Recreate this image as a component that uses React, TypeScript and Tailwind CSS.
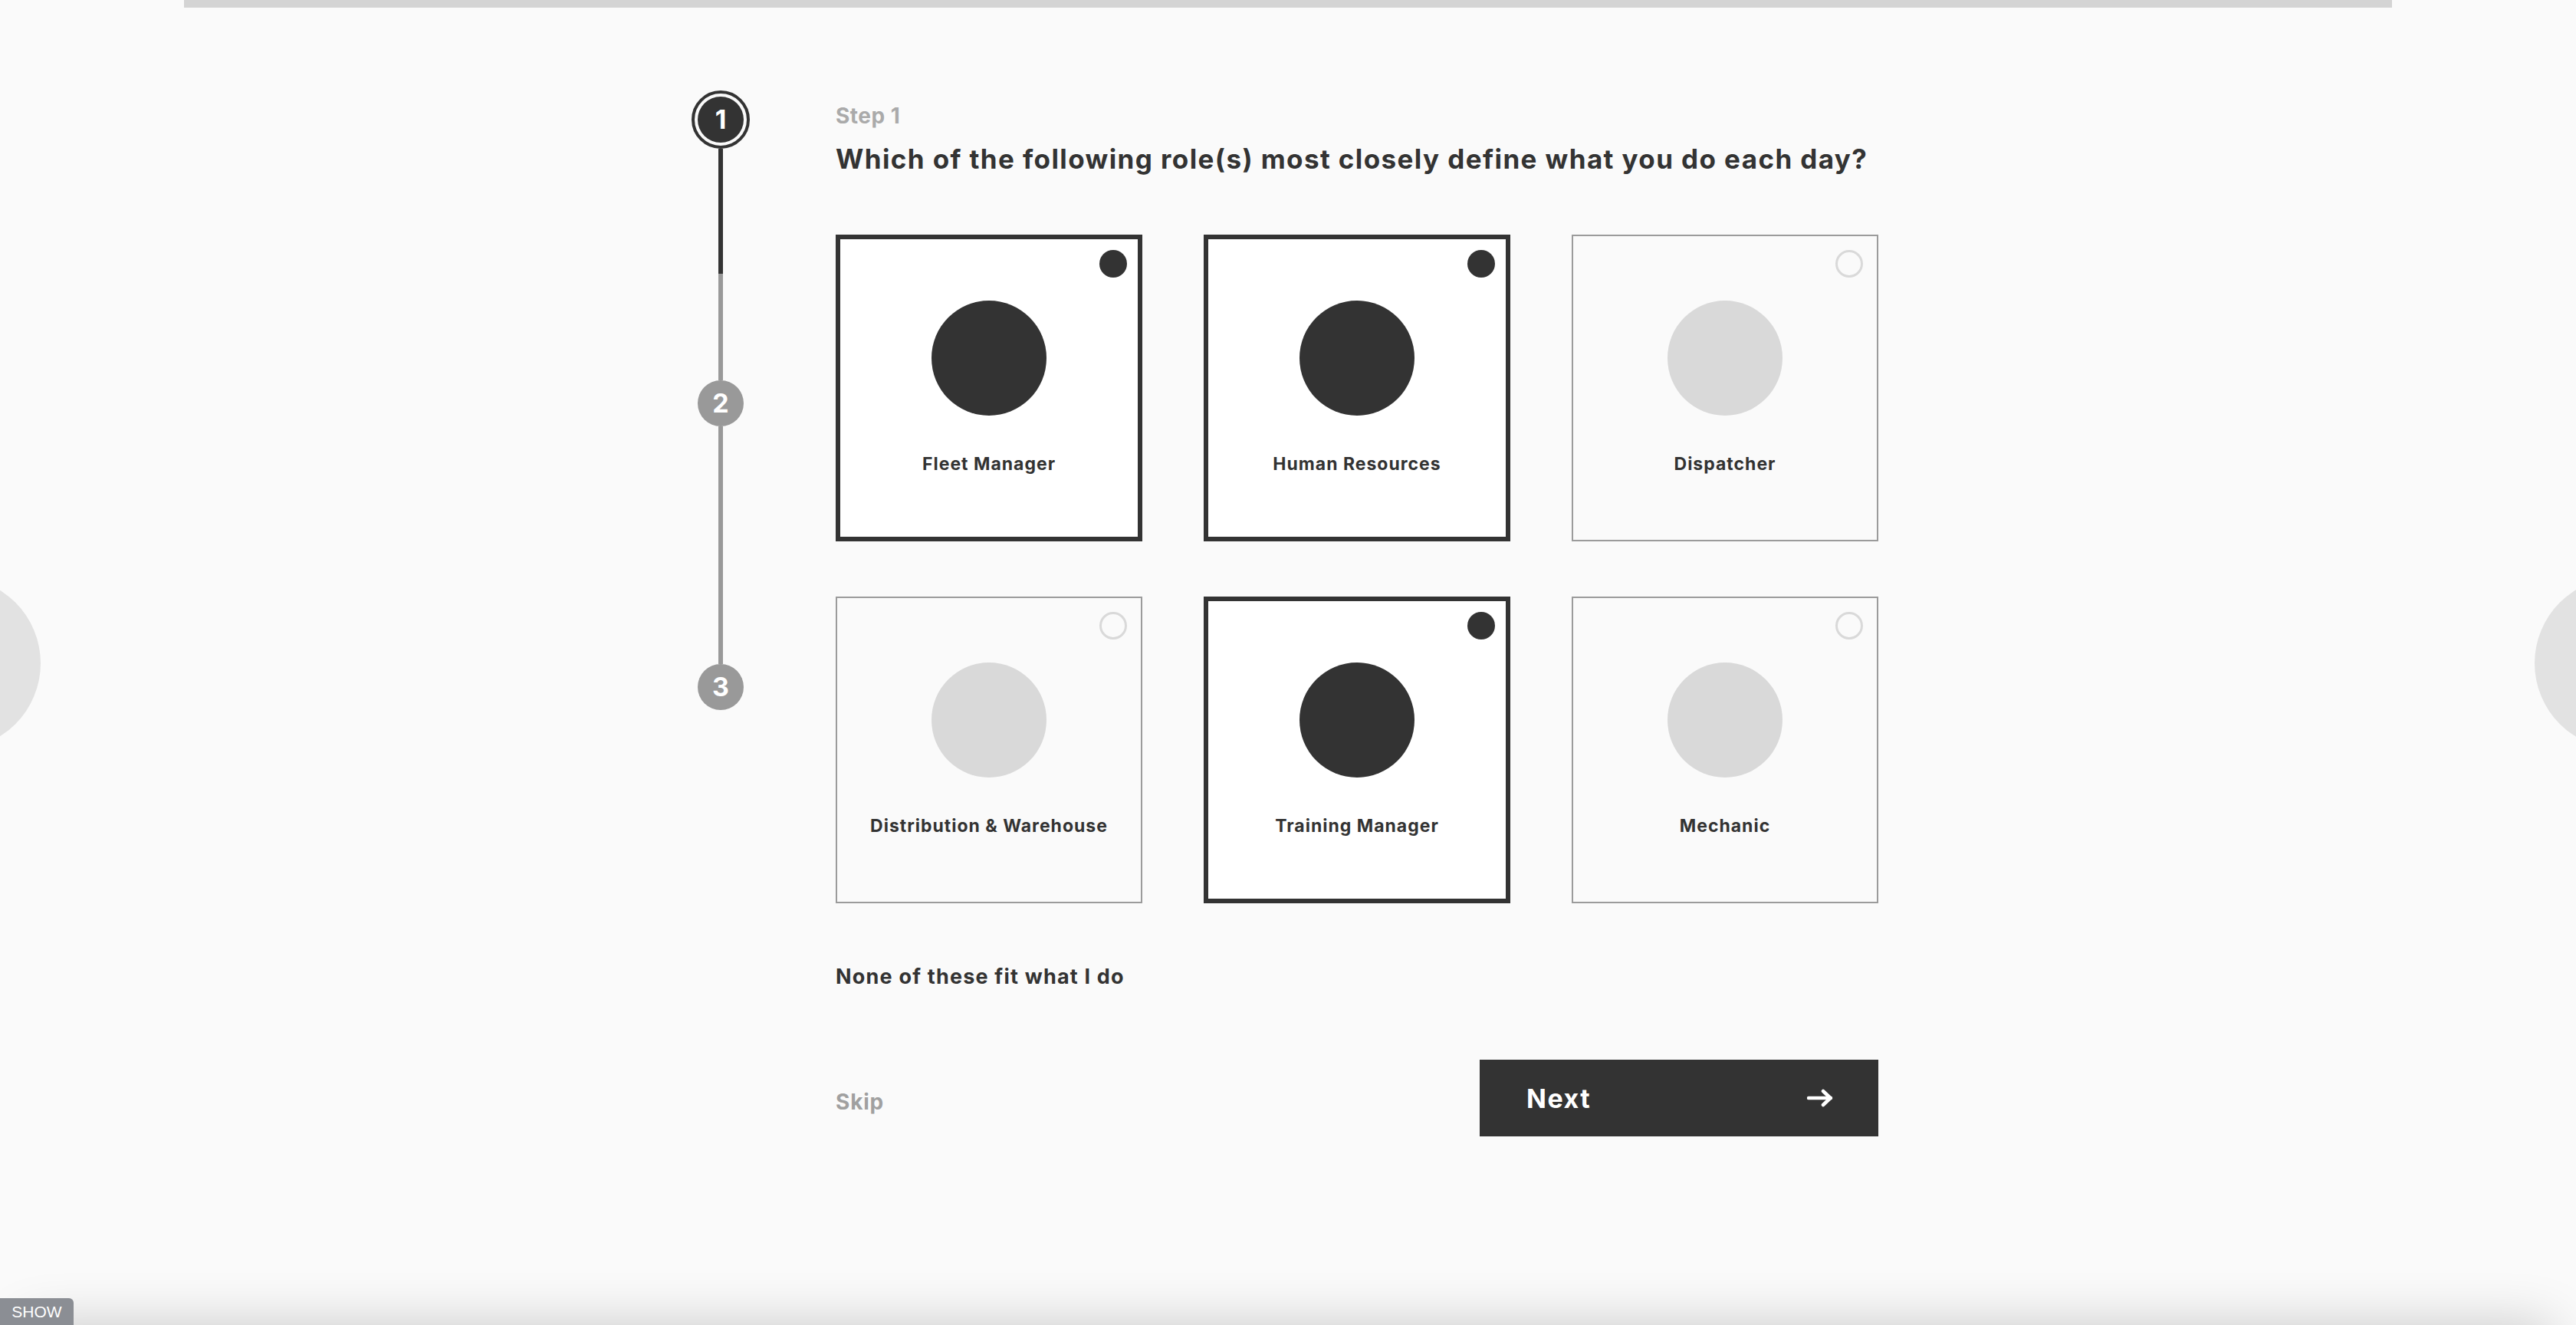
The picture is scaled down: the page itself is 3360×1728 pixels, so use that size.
import clsx from "clsx";

const ROLES = [
  { label: "Fleet Manager", selected: true },
  { label: "Human Resources", selected: true },
  { label: "Dispatcher", selected: false },
  { label: "Distribution & Warehouse", selected: false },
  { label: "Training Manager", selected: true },
  { label: "Mechanic", selected: false },
];

function RoleCard({ label, selected }: { label: string; selected: boolean }) {
  return (
    <button
      type="button"
      className={clsx(
        "relative flex h-[400px] w-[400px] flex-col items-center",
        selected
          ? "border-[6px] border-[#333333] bg-white pt-[80px]"
          : "border-2 border-[#9b9b9b] bg-[#fafafa] pt-[84px]"
      )}
    >
      {/* check dot */}
      <span
        className={clsx(
          "absolute h-9 w-9 rounded-full",
          selected
            ? "right-[14px] top-[14px] bg-[#333333]"
            : "right-[18px] top-[18px] border-[3px] border-[#d9d9d9]"
        )}
      />
      <span
        className={clsx(
          "h-[150px] w-[150px] rounded-full",
          selected ? "bg-[#333333]" : "bg-[#d9d9d9]"
        )}
      />
      <span className="mt-[49px] text-[23px] font-bold leading-[28px] tracking-[1px] text-[#333333]">
        {label}
      </span>
    </button>
  );
}

function Stepper() {
  return (
    <div className="flex w-[76px] flex-col items-center">
      <div className="flex h-[76px] w-[76px] items-center justify-center rounded-full border-4 border-[#333333] bg-[#fafafa]">
        <div className="flex h-[60px] w-[60px] items-center justify-center rounded-full bg-[#333333] text-[34px] font-bold leading-none text-white">
          1
        </div>
      </div>
      <div className="h-[163px] w-[6px] bg-[#333333]" />
      <div className="h-[139px] w-[6px] bg-[#999999]" />
      <div className="flex h-[60px] w-[60px] items-center justify-center rounded-full bg-[#999999] text-[34px] font-bold leading-none text-white">
        2
      </div>
      <div className="h-[310px] w-[6px] bg-[#999999]" />
      <div className="flex h-[60px] w-[60px] items-center justify-center rounded-full bg-[#999999] text-[34px] font-bold leading-none text-white">
        3
      </div>
    </div>
  );
}

export default function App() {
  return (
    <div className="relative min-h-screen overflow-hidden bg-[#fafafa] font-['Inter','Noto_Sans',sans-serif] text-[#333333]">
      {/* progress */}
      <div className="mx-[240px] h-[10px] bg-[#d4d4d4]" />

      {/* side nav handles */}
      <div className="absolute left-[-171px] top-[753px] h-[224px] w-[224px] rounded-full bg-[#e2e2e2]" />
      <div className="absolute left-[3306px] top-[753px] h-[224px] w-[224px] rounded-full bg-[#e2e2e2]" />

      <div className="mx-auto mt-[108px] flex w-[1556px] gap-[112px] pr-[8px]">
        <Stepper />

        <div className="flex w-[1360px] flex-col pt-[16px]">
          <div className="text-[28px] font-bold leading-[34px] tracking-[0.5px] text-[#aaaaaa]">Step 1</div>
          <h1 className="mt-[17px] whitespace-nowrap text-[35px] font-bold leading-[44px] tracking-[1.4px] text-[#333333]">
            Which of the following role(s) most closely define what you do each day?
          </h1>

          <div className="mt-[77px] grid grid-cols-3 gap-x-[80px] gap-y-[72px]">
            {ROLES.map((r) => (
              <RoleCard key={r.label} label={r.label} selected={r.selected} />
            ))}
          </div>

          <div className="mt-[80px] text-[27px] font-bold leading-[32px] tracking-[1.2px] text-[#333333]">
            None of these fit what I do
          </div>

          <div className="mt-[92px] flex items-center justify-between">
            <button type="button" className="mt-[9px] text-[28px] font-bold leading-[32px] tracking-[0.8px] text-[#a0a0a0]">
              Skip
            </button>
            <button
              type="button"
              className="flex h-[100px] w-[520px] items-center justify-between bg-[#333333] pl-[61px] pr-[59px] text-[34px] font-bold tracking-[1.5px] text-white"
            >
              Next
              <svg width="34" height="24" viewBox="0 0 34 24" fill="none" stroke="currentColor" strokeWidth="4.5" strokeLinecap="round" strokeLinejoin="round">
                <path d="M2 12h29" />
                <path d="M21 3l9.5 9-9.5 9" />
              </svg>
            </button>
          </div>
        </div>
      </div>

      {/* bottom drawer shadow */}
      <div className="fixed bottom-[-80px] left-[30px] right-[30px] h-[80px] bg-[#fafafa] shadow-[0_0_70px_rgba(0,0,0,0.2)]" />
      <div className="fixed bottom-0 left-0 flex h-[35px] w-[96px] items-center justify-center rounded-tr-[6px] bg-[#8b8e94] font-['Liberation_Sans',sans-serif] text-[21px] text-white">
        SHOW
      </div>
    </div>
  );
}
